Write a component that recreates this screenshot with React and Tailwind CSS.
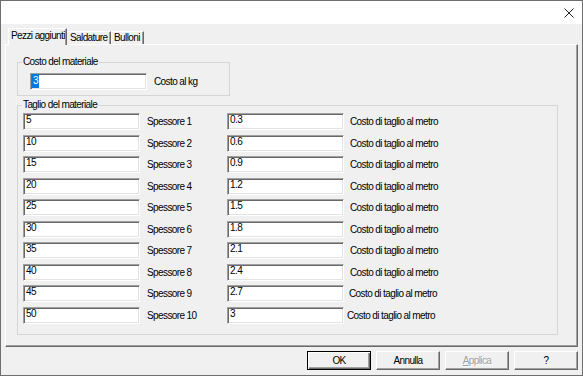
import React from "react";

const rows = [
  ["5", "Spessore 1", "0.3", "pl-[6px]"],
  ["10", "Spessore 2", "0.6", "pl-[6px]"],
  ["15", "Spessore 3", "0.9", "pl-[6px]"],
  ["20", "Spessore 4", "1.2", "pl-[6px]"],
  ["25", "Spessore 5", "1.5", "pl-[6px]"],
  ["30", "Spessore 6", "1.8", "pl-[6px]"],
  ["35", "Spessore 7", "2.1", "pl-[6px]"],
  ["40", "Spessore 8", "2.4", "pl-[6px]"],
  ["45", "Spessore 9", "2.7", "pl-[5px]"],
  ["50", "Spessore 10", "3", "pl-[3px]"],
];

function Field({ value, selected }) {
  return (
    <div className="h-[17px] flex items-start bg-white border border-t-[#a0a0a0] border-l-[#a0a0a0] border-r-white border-b-white shadow-[inset_1px_1px_0_#696969,inset_-1px_-1px_0_#e3e3e3] pl-[1px] leading-[12px]">
      {selected ? (
        <span className="mt-0 h-[14px] px-[1px] leading-[14px] bg-[#0078d7] text-white">
          {value}
        </span>
      ) : (
        <span className="pl-[1px]">{value}</span>
      )}
    </div>
  );
}

function Button({ children, def, disabled }) {
  const frame = def
    ? "border border-black shadow-[inset_1px_1px_0_#fff,inset_-1px_-1px_0_#696969,inset_-2px_-2px_0_#a0a0a0]"
    : "border border-t-white border-l-white border-r-[#696969] border-b-[#696969] shadow-[inset_-1px_-1px_0_#a0a0a0]";
  return (
    <div
      className={
        "w-[64px] h-[19px] flex items-center justify-center " +
        frame +
        (disabled ? " text-[#a0a0a0]" : "")
      }
    >
      {children}
    </div>
  );
}

export default function App() {
  return (
    <div className="w-[583px] h-[376px] border border-[#6e6e6e] bg-[#f0f0f0] flex flex-col overflow-hidden text-[10px] tracking-[-0.6px] text-black font-['Liberation_Sans',Arial,sans-serif]">
      {/* title bar */}
      <div className="h-[23px] shrink-0 bg-white flex items-center justify-end pr-[8px]">
        <svg width="10" height="10" viewBox="0 0 10 10">
          <path d="M0.5 0.5 L9.5 9.5 M9.5 0.5 L0.5 9.5" stroke="#222" strokeWidth="1" />
        </svg>
      </div>

      <div className="flex-1 flex flex-col px-[4px] pt-[4px]">
        {/* tabs */}
        <div className="flex items-end h-[17px] -mb-px relative z-10 pl-[3px]">
          <div className="h-[17px] w-[59px] bg-[#f0f0f0] border-l border-t border-l-white border-t-white border-r border-r-[#696969] shadow-[inset_-1px_0_0_#a0a0a0] pl-[2px] pt-[1px] leading-[12px]">
            Pezzi aggiunti
          </div>
          <div className="h-[13px] w-[44px] mb-px border-t border-t-white border-r border-r-[#696969] shadow-[inset_-1px_0_0_#a0a0a0] pl-[3px] leading-[12px]">
            Saldature
          </div>
          <div className="h-[13px] w-[33px] mb-px border-t border-l border-t-white border-l-white border-r border-r-[#696969] shadow-[inset_-1px_0_0_#a0a0a0] pl-[2px] leading-[12px]">
            Bulloni
          </div>
        </div>

        {/* tab panel */}
        <div className="h-[303px] border border-l-white border-t-white border-r-[#696969] border-b-[#696969] shadow-[inset_-1px_-1px_0_#a0a0a0] px-[11px] pt-[11px]">
          <fieldset className="w-[213px] border border-[#d5d5d5]">
            <legend className="ml-[4px] px-[1px] leading-[12px]">Costo del materiale</legend>
            <div className="flex items-center pl-[12px] pt-[5px] pb-[5px]">
              <div className="w-[117px]">
                <Field value="3" selected />
              </div>
              <span className="pl-[7px]">Costo al kg</span>
            </div>
          </fieldset>

          <fieldset className="w-[541px] mt-[3px] border border-[#d5d5d5]">
            <legend className="ml-[4px] px-[1px] leading-[12px]">Taglio del materiale</legend>
            <div className="grid grid-cols-[117px_87px_117px_1fr] items-center gap-y-[4.5px] pl-[5px] pt-[2px] pb-[10px]">
              {rows.map(([a, label, b, pad]) => (
                <React.Fragment key={label}>
                  <Field value={a} />
                  <span className="pl-[7px]">{label}</span>
                  <Field value={b} />
                  <span className={pad}>Costo di taglio al metro</span>
                </React.Fragment>
              ))}
            </div>
          </fieldset>
        </div>

        {/* buttons */}
        <div className="flex justify-end gap-[5px] mt-[4px]">
          <Button def>OK</Button>
          <Button>Annulla</Button>
          <Button disabled>
            <span className="[text-shadow:1px_1px_0_#fff]">
              <span className="underline">A</span>pplica
            </span>
          </Button>
          <Button>?</Button>
        </div>
      </div>
    </div>
  );
}
